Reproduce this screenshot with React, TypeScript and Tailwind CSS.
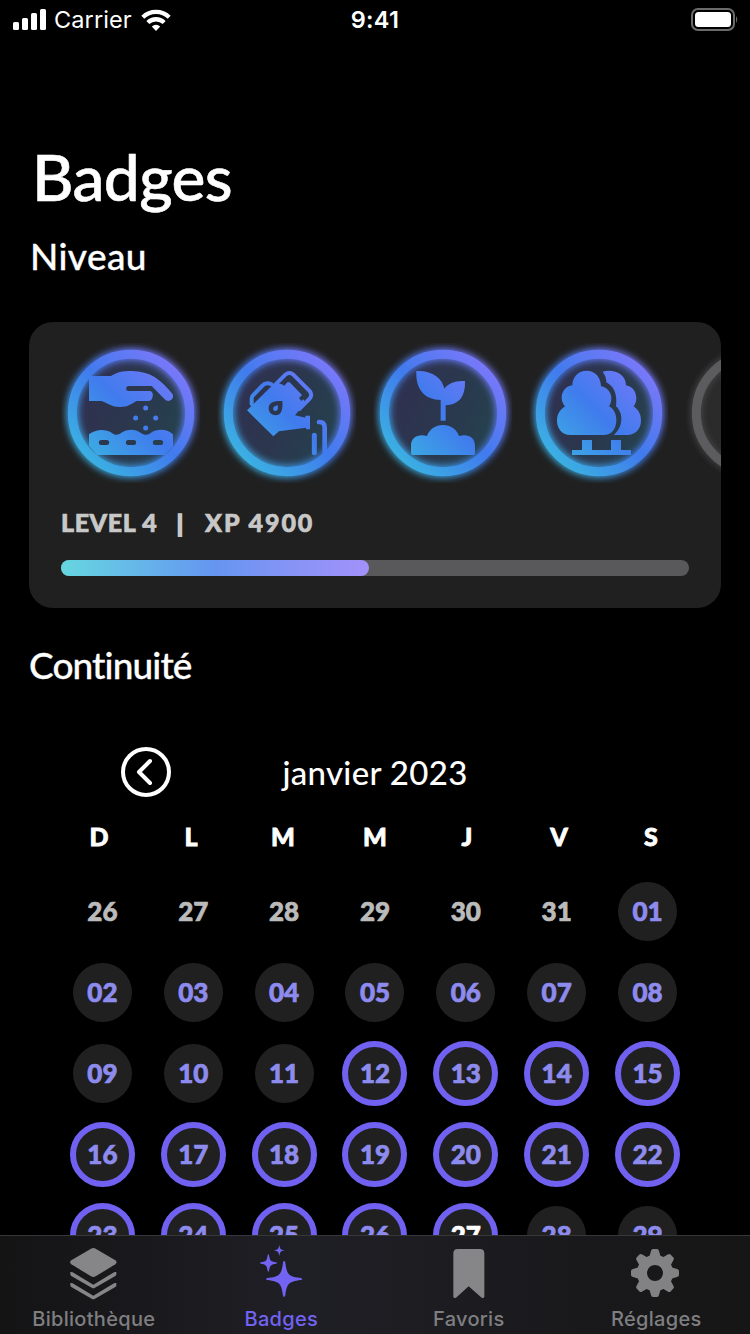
import type { ReactNode } from "react";

type DayKind = "muted" | "plain" | "ring" | "today";

const weekdays = ["D", "L", "M", "M", "J", "V", "S"];

const days: { label: string; kind: DayKind }[] = [
  ...["26", "27", "28", "29", "30", "31"].map((label) => ({ label, kind: "muted" as DayKind })),
  ...Array.from({ length: 29 }, (_, i) => {
    const n = i + 1;
    const kind: DayKind = n === 27 ? "today" : n >= 12 && n < 27 ? "ring" : "plain";
    return { label: String(n).padStart(2, "0"), kind };
  }),
];

const dayStyles: Record<DayKind, string> = {
  muted: "size-[59px] text-[#bbbbbb]",
  plain: "size-[59px] bg-[#202020] text-[#8e8bee]",
  ring: "size-[65px] border-[6px] border-[#7061f1] bg-[#202020] text-[#8e8bee]",
  today: "size-[65px] border-[6px] border-[#7061f1] bg-[#202020] text-white",
};

function Badge({ id, children }: { id: string; children: ReactNode }) {
  const paint = `url(#${id}-paint)`;
  return (
    <svg viewBox="0 0 468 465" className="h-[155px] w-[156px] shrink-0">
      <defs>
        <linearGradient id={`${id}-paint`} gradientUnits="userSpaceOnUse" x1="109" y1="368" x2="377" y2="100">
          <stop offset="0" stopColor="#3bb0e2" />
          <stop offset="0.5" stopColor="#407bed" />
          <stop offset="1" stopColor="#7878f9" />
        </linearGradient>
        <linearGradient id={`${id}-inner`} gradientUnits="userSpaceOnUse" x1="100" y1="170" x2="390" y2="290">
          <stop offset="0" stopColor="#2f3150" />
          <stop offset="0.5" stopColor="#2b374e" />
          <stop offset="1" stopColor="#25414e" />
        </linearGradient>
        <filter id={`${id}-blur`} x="-20%" y="-20%" width="140%" height="140%">
          <feGaussianBlur stdDeviation="11" />
        </filter>
        <clipPath id={`${id}-clip`}>
          <rect x="34" y="24" width="417" height="420" />
        </clipPath>
      </defs>
      <circle cx="243" cy="234" r="164" fill={`url(#${id}-inner)`} />
      <g clipPath={`url(#${id}-clip)`}>
        <circle cx="243" cy="234" r="176" fill="none" stroke={paint} strokeWidth="36" filter={`url(#${id}-blur)`} />
      </g>
      <circle cx="243" cy="234" r="176" fill="none" stroke={paint} strokeWidth="27" />
      <g fill={paint} stroke="none">
        {children}
      </g>
      {id === "water" && (
        <g fill="none" stroke={paint} strokeLinecap="round">
          <path strokeWidth="12" d="M137 207 V191 Q137 185 141 181 L168 153 Q180 140 196 148" />
          <path strokeWidth="12" d="M206 151 L238 119 Q250 109 262 119 L311 168 Q320 180 311 191 L280 222" />
          <path strokeWidth="15" d="M325 301 V353" />
          <path strokeWidth="14" d="M339 261 Q356 260 356 278 V352" />
        </g>
      )}
    </svg>
  );
}

function LevelBadges() {
  return (
    <div className="flex h-[155px] overflow-hidden pl-[21px]">
      <Badge id="seed">
        <path d="M117 123 H183 C200 112 216 108 245 108 C300 108 335 135 368 178 C374 193 355 205 344 193 L305 153 H236 a7.500 7.500 0 0 0 0 15 H298 c9 0 12 8 10 17 c-2 9 -6 13 -13 13 H260 C245 205 237 216 210 216 C184 216 175 205 155 198 H117Z" />
        <circle cx="287" cy="219" r="7.500" />
        <circle cx="257" cy="249" r="7.500" />
        <circle cx="317" cy="249" r="7.500" />
        <circle cx="287" cy="279" r="7.500" />
        <path
          fillRule="evenodd"
          d="M117 298 C135 283 165 280 185 293 C195 301 203 301 213 294 C233 281 255 281 272 293 C283 301 292 301 303 293 C322 281 350 281 369 298 V335 L345 360 H141 L117 332Z M154 315 h16 a7.500 7.500 0 0 1 0 15 h-16 a7.500 7.500 0 0 1 0 -15Z M235 315 h16 a7.500 7.500 0 0 1 0 15 h-16 a7.500 7.500 0 0 1 0 -15Z M316 315 h16 a7.500 7.500 0 0 1 0 15 h-16 a7.500 7.500 0 0 1 0 -15Z"
        />
      </Badge>
      <Badge id="water">
        <path
          fillRule="evenodd"
          d="M123 226 L206 144 L226 147 L235 152 L244 142 L251 142 L288 180 L279 189 L286 198 L292 193 L298 203 L267 241 L298 248 V242 H312 V283 H300 V278 L219 289 L202 304Z M229 198 C214 197 188 198 188 220 C188 232 197 241 209 241 C227 241 231 222 229 198Z M215 211 C218 220 215 228 208 228 C198 227 199 212 215 211Z"
        />
      </Badge>
      <Badge id="sprout">
        <path d="M163 108 C210 105 241 130 247 161 C258 145 280 136 309 138 C311 185 290 210 251 211 V257 H236 V195 C190 194 160 165 163 108Z" />
        <path d="M147 355 V331 C147 308 168 295 195 303 C202 283 220 270 243 270 C266 270 284 283 291 303 C318 295 339 308 339 331 V355 q0 5 -5 5 H152 q-5 0 -5 -5Z" />
      </Badge>
      <Badge id="trees">
        <path d="M163 151 C163 125 182 107 206 107 C232 107 249 128 249 154 C268 157 280 173 280 190 C280 200 278 207 273 214 C288 222 295 238 295 255 C295 282 280 300 257 300 H157 C130 300 117 278 117 257 C117 238 125 225 141 214 C129 200 128 180 137 167 C144 156 153 152 163 151Z" />
        <path d="M254 110 C285 101 324 115 324 151 C345 155 355 172 355 190 C355 200 352 207 347 214 C362 225 369 238 369 257 C369 283 350 300 328 300 H288 C303 285 310 270 310 250 C310 235 303 222 294 214 C297 190 295 158 265 142 C265 130 262 122 254 110Z" />
        <path d="M162 345 H192 V315 H222 V345 H279 V315 H309 V345 H339 V360 H162Z" />
      </Badge>
      <svg viewBox="0 0 468 465" className="h-[155px] w-[156px] shrink-0">
        <defs>
          <filter id="locked-blur" x="-20%" y="-20%" width="140%" height="140%">
            <feGaussianBlur stdDeviation="11" />
          </filter>
        </defs>
        <circle cx="243" cy="234" r="164" fill="#2b2b2b" />
        <circle cx="243" cy="234" r="176" fill="none" stroke="#4c4c4e" strokeWidth="30" filter="url(#locked-blur)" />
        <circle cx="243" cy="234" r="176" fill="none" stroke="#5c5c5e" strokeWidth="27" />
      </svg>
    </div>
  );
}

function StatusBar() {
  return (
    <div className="grid h-10 grid-cols-3 items-center px-3 font-['Inter',sans-serif] text-white">
      <div className="flex items-center">
        <svg viewBox="0 0 34 22" className="h-[22px] w-[34px]" fill="#fff">
          <rect x="1" y="13" width="6" height="8" rx="1.500" />
          <rect x="10" y="9" width="6" height="12" rx="1.500" />
          <rect x="19" y="4" width="6" height="17" rx="1.500" />
          <rect x="28" y="0" width="6" height="21" rx="1.500" />
        </svg>
        <span className="ml-2 w-[78px] text-[23.500px] leading-10 tracking-[0.1px]">Carrier</span>
        <svg viewBox="0 0 30 22" className="ml-[9px] h-[22px] w-[30px]">
          <g fill="none" stroke="#fff" strokeWidth="4.300">
            <path d="M1.800 8.300 A19 19 0 0 1 28.200 8.300" />
            <path d="M6.800 13.500 A12 12 0 0 1 23.200 13.500" />
          </g>
          <path fill="#fff" d="M15 22 L10.800 17.600 A6.500 6.500 0 0 1 19.200 17.600Z" />
        </svg>
      </div>
      <div className="text-center text-[23.500px] font-semibold leading-10 tracking-[0.300px]">9:41</div>
      <div className="flex justify-end">
        <svg viewBox="0 0 48 24" className="h-6 w-12">
          <rect x="2" y="1" width="42" height="21" rx="6" fill="none" stroke="#6b6b6b" strokeWidth="2" />
          <rect x="5" y="4" width="36" height="15" rx="3.500" fill="#fff" />
          <path d="M46 8 q2.500 3.500 0 7Z" fill="#6b6b6b" />
        </svg>
      </div>
    </div>
  );
}

function Tab({ label, active, children }: { label: string; active?: boolean; children: ReactNode }) {
  return (
    <div className={active ? "flex flex-1 flex-col items-center text-[#7363f2]" : "flex flex-1 flex-col items-center text-[#7f7f81]"}>
      <svg viewBox="191 138 180 207" className="h-[69px] w-[60px]" fill="currentColor">
        {children}
      </svg>
      <span className="text-[20px] font-medium leading-[28px] tracking-[0.300px]">{label}</span>
    </div>
  );
}

const gearTooth = "M264 200 L269 183 Q270 177 275 177 H287 Q292 177 293 183 L298 200Z";

function TabBar() {
  return (
    <nav className="flex h-[99px] shrink-0 border-t border-[#37373a] bg-linear-to-r from-[#141415] via-[#1f1f26] via-40% to-[#161616] font-['Inter',sans-serif]">
      <Tab label="Bibliothèque">
        <g fill="#868688">
          <path d="M272 176 Q279 172 286 176 L345 211 Q352 217 345 223 L286 259 Q279 263 272 259 L213 223 Q206 217 213 211Z" />
          <path d="M210 246 Q213 245 217 247 L279 284 L341 247 Q345 245 348 246 V253 Q348 256 345 258 L284 293 Q279 296 274 293 L213 258 Q210 256 210 253Z" />
          <path d="M210 279 Q213 278 217 280 L279 317 L341 280 Q345 278 348 279 V286 Q348 289 345 291 L284 326 Q279 329 274 326 L213 291 Q210 289 210 286Z" />
        </g>
      </Tab>
      <Tab label="Badges" active>
        <path d="M290 213 Q294 213 294 218 C299 255 304 260 340 264 Q345 265 345 267 Q345 270 340 270 C304 275 299 280 294 316 Q293 321 290 321 Q288 321 287 316 C282 280 277 275 241 270 Q236 270 236 267 Q236 265 241 264 C277 260 282 255 287 218 Q287 213 290 213Z" />
        <path d="M243 193 Q245 193 245 196 C248 212 250 215 266 217 Q269 218 269 219 Q269 221 266 221 C250 224 248 226 245 242 Q245 245 243 245 Q242 245 241 242 C238 226 237 224 221 221 Q218 221 218 219 Q218 218 221 217 C237 215 238 212 241 196 Q242 193 243 193Z" />
        <path d="M276 165 C279 178 279 179 292 181 C279 184 279 185 276 198 C273 185 272 184 259 181 C272 179 273 178 276 165Z" />
      </Tab>
      <Tab label="Favoris">
        <path fill="#868689" d="M248 177 H314 Q327 177 327 190 V320 Q325 326 319 323 L280 289 L242 323 Q236 326 234 320 V190 Q234 177 248 177Z" />
      </Tab>
      <Tab label="Réglages">
        <g transform="translate(-3 0)" fill="#828284">
          <circle cx="281" cy="249" r="39" fill="none" stroke="#828284" strokeWidth="30" />
          {[0, 45, 90, 135, 180, 225, 270, 315].map((angle) => (
            <path key={angle} d={gearTooth} transform={`rotate(${angle} 281 249)`} />
          ))}
        </g>
      </Tab>
    </nav>
  );
}

export default function App() {
  return (
    <div className="flex h-[1334px] w-[750px] flex-col overflow-hidden bg-black font-['Lato',sans-serif] text-white [font-variant-ligatures:none]">
      <StatusBar />
      <main className="flex min-h-0 flex-1 flex-col overflow-hidden">
        <h1 className="mt-[97px] h-[80px] pl-[32px] text-[64px] font-medium leading-[80px] tracking-[-0.600px] [-webkit-text-stroke:0.600px_white]">Badges</h1>
        <h2 className="mt-[15px] h-[48px] pl-[30px] text-[37px] font-medium leading-[48px] tracking-[0.400px] [-webkit-text-stroke:0.300px_white]">Niveau</h2>
        <section className="mx-[29px] mt-[42px] h-[286px] shrink-0 overflow-hidden rounded-[24px] bg-[#202020] pt-[13px]">
          <LevelBadges />
          <div className="flex h-[66px] items-center whitespace-pre pl-8 text-[25px] font-black text-[#c8c8c8] [-webkit-text-stroke:0.700px_#c8c8c8]">
            <span className="w-[116px] tracking-[0.600px]">LEVEL 4</span>
            <span className="w-[28px] text-[22px] [-webkit-text-stroke:2px_#c8c8c8]">|</span>
            <span className="tracking-[1.900px]">XP 4900</span>
          </div>
          <div className="mx-8 mt-1 h-4 rounded-full bg-[#59595b]">
            <div className="h-4 w-[308px] rounded-full bg-linear-to-r from-[#66d6e0] via-[#6595f0] to-[#a291fb]" />
          </div>
        </section>
        <h2 className="mt-[33px] h-[48px] shrink-0 pl-[29px] text-[37px] font-medium leading-[48px] tracking-[-0.900px] [-webkit-text-stroke:0.300px_white]">Continuité</h2>
        <div className="mt-[58px] grid h-[50px] shrink-0 grid-cols-[121px_508px_121px] items-center">
          <svg viewBox="0 0 50 50" className="col-start-2 row-start-1 size-[50px]" fill="none" stroke="#fff" strokeWidth="4">
            <circle cx="25" cy="25" r="23" />
            <path d="M29 14 L18 25 L29 36" strokeLinecap="round" strokeLinejoin="round" />
          </svg>
          <div className="col-start-2 row-start-1 text-center text-[33px] font-medium leading-[50px] tracking-[0.300px]">janvier 2023</div>
        </div>
        <div className="mx-[53px] mt-[20px] grid h-[40px] shrink-0 grid-cols-7 items-center text-center text-[25px] font-black [-webkit-text-stroke:0.800px_white]">
          {weekdays.map((day, i) => (
            <span key={i}>{day}</span>
          ))}
        </div>
        <div className="mx-[57px] mt-[14px] grid shrink-0 auto-rows-[81px] grid-cols-7 place-items-center">
          {days.map((day, i) => (
            <div
              key={i}
              className={`flex items-center justify-center rounded-full text-[26px] font-black [-webkit-text-stroke:0.700px_currentColor] ${dayStyles[day.kind]}`}
            >
              {day.label}
            </div>
          ))}
        </div>
      </main>
      <TabBar />
    </div>
  );
}
